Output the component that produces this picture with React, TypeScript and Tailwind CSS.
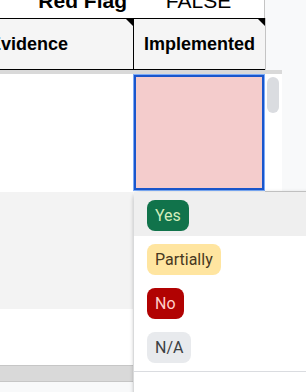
import React from "react";

const options = [
  { label: "Yes", bg: "bg-[#11734b]", fg: "text-[#d4edbc]", active: true },
  { label: "Partially", bg: "bg-[#ffe5a0]", fg: "text-[#473821]", active: false },
  { label: "No", bg: "bg-[#b10202]", fg: "text-[#ffcfc9]", active: false },
  { label: "N/A", bg: "bg-[#e8eaed]", fg: "text-[#3c4043]", active: false },
];

// Black corner marker shown in the header cells
function Corner() {
  return (
    <svg className="absolute right-0 top-0" width="7" height="7" viewBox="0 0 7 7">
      <polygon points="0,0 7,0 7,7" fill="#000" />
    </svg>
  );
}

export default function App() {
  return (
    <div className="relative w-[306px] h-[392px] overflow-hidden bg-[#f8f9fa] font-['Liberation_Sans',Arial,sans-serif] text-black">
      {/* Top row (cut off) */}
      <div className="flex h-[18px]">
        <div className="w-[133px] h-full overflow-hidden bg-white">
          <div className="-mt-[10px] text-right pr-[6px] text-[21px] leading-[21px] font-bold">Red Flag</div>
        </div>
        <div className="w-[132px] h-full overflow-hidden bg-white border-r border-[#c4c4c4]">
          <div className="-mt-[10px] text-center text-[21px] leading-[21px]">FALSE</div>
        </div>
        <div className="flex-1" />
      </div>

      {/* Header row */}
      <div className="flex h-[52px]">
        <div className="flex w-[265px] border-y border-black bg-[#f5f5f5]">
          <div className="relative flex w-[133px] items-center overflow-hidden">
            <span className="-ml-[11px] whitespace-nowrap text-[18px] leading-none font-bold">Evidence</span>
            <Corner />
          </div>
          <div className="relative flex flex-1 items-center justify-center border-l border-black">
            <span className="text-[18px] leading-none font-bold">Implemented</span>
            <Corner />
          </div>
        </div>
        <div className="w-px bg-[#c4c4c4]" />
        <div className="flex-1" />
      </div>

      {/* Frozen row separator */}
      <div className="flex h-[4px]">
        <div className="w-[282px] bg-[#d9d9d9]" />
        <div className="flex-1" />
      </div>

      {/* Body */}
      <div className="flex">
        <div className="flex w-[133px] flex-col">
          <div className="h-[118px] bg-white" />
          <div className="h-[117px] bg-[#f3f3f3]" />
          <div className="h-[56px] bg-white" />
          <div className="h-[17px] border-y border-[#c6c6c6] bg-[#d9d9d9]" />
          <div className="h-[20px] bg-[#f8f9fa]" />
        </div>
        <div className="flex w-[132px] flex-col">
          <div className="h-[117px] border border-[#7baaf7] bg-white">
            <div className="h-full w-full border-2 border-[#1a56cc] bg-[#f4cccc]" />
          </div>
        </div>
        <div className="flex flex-1 flex-col">
          <div className="flex h-[117px]">
            <div className="w-[17px] bg-white pl-[2px] pt-[3px]">
              <div className="h-[36px] w-[12px] rounded-full bg-[#dadce0]" />
            </div>
            <div className="flex-1 bg-[#f8f9fa]" />
          </div>
          <div className="h-px bg-[#d0d0d0]" />
        </div>
      </div>

      {/* Dropdown menu */}
      <div className="absolute left-[134px] top-[192px] w-[220px] h-[230px] rounded-tl-[6px] bg-white shadow-[0_1px_4px_rgba(0,0,0,0.3)] font-['Roboto',sans-serif]">
        {options.map((o) => (
          <div
            key={o.label}
            className={`h-[44px] pl-[13px] pt-[8px] ${o.active ? "bg-[#efefef]" : ""}`}
          >
            <span
              className={`inline-flex h-[31px] items-center rounded-[8px] px-[8px] text-[16px] ${o.bg} ${o.fg}`}
            >
              {o.label}
            </span>
          </div>
        ))}
        <div className="mt-[3px] border-t border-[#dadce0]" />
      </div>
    </div>
  );
}
